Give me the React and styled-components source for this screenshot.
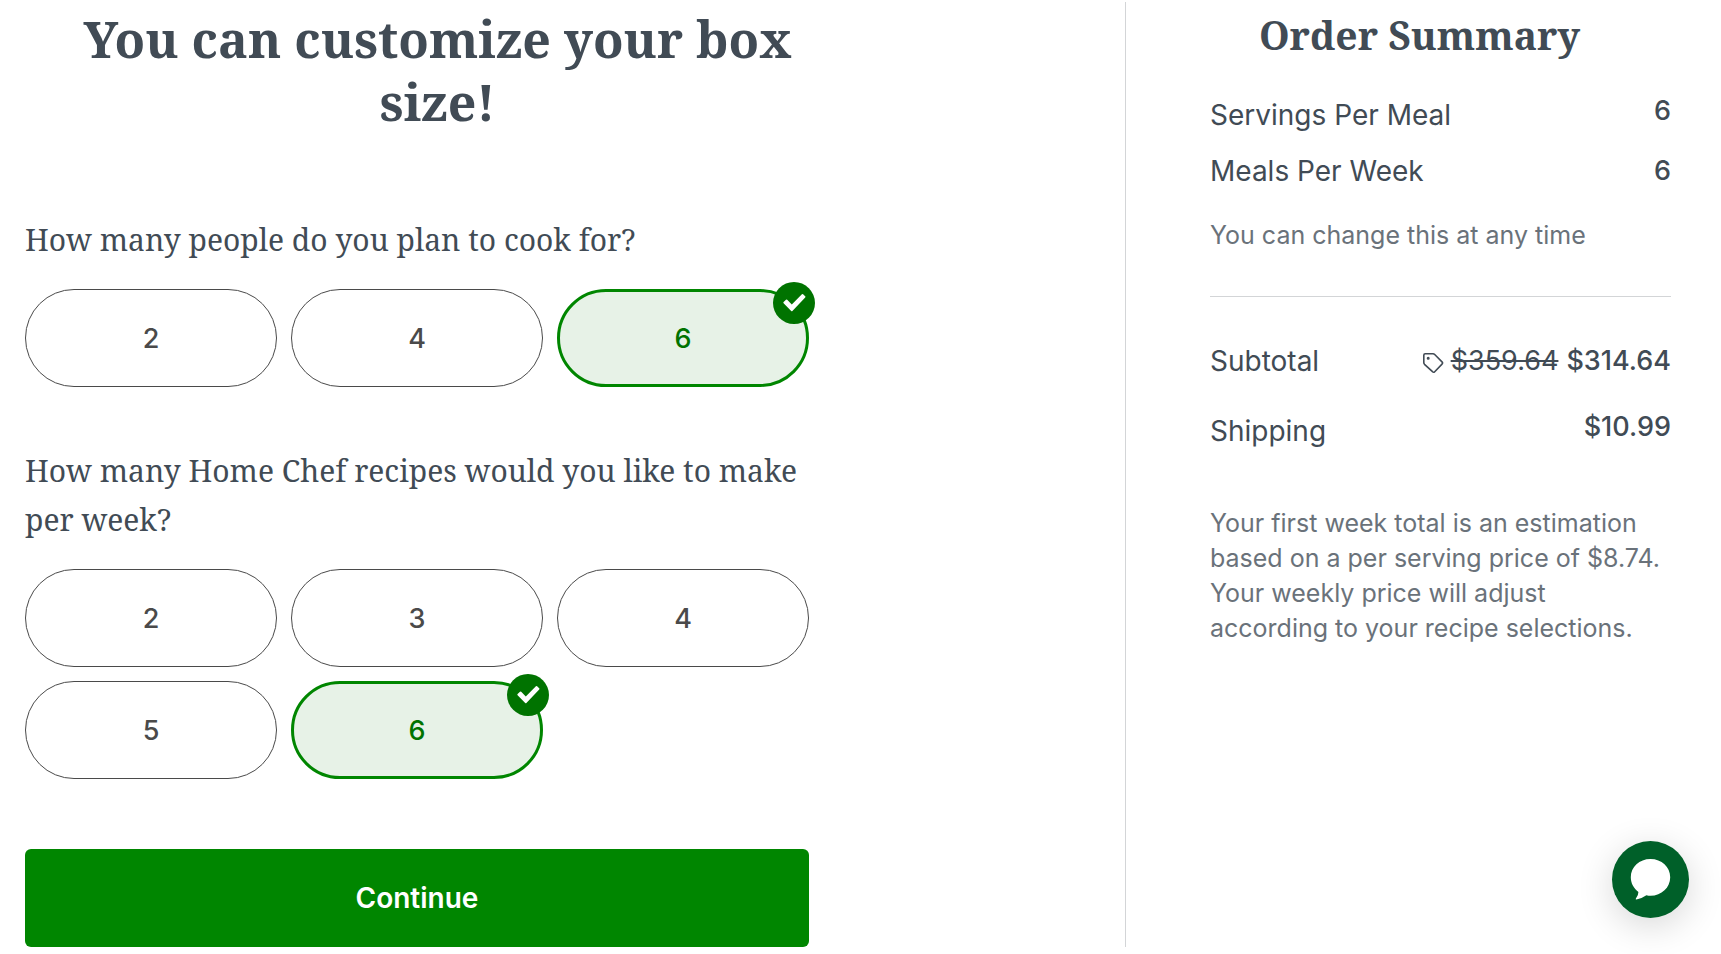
import React, { useState } from 'react';
import styled, { createGlobalStyle } from 'styled-components';

const peopleOptions = [2, 4, 6];
const recipeOptions = [2, 3, 4, 5, 6];

const OptionGroup = ({ name, question, options, value, onChange }) => {
    return (
        <Group>
            <Question>{question}</Question>
            <Options>
                {options.map(option => (
                    <Pill key={option} $selected={option === value}>
                        <input
                            type="radio"
                            name={name}
                            value={option}
                            checked={option === value}
                            onChange={() => onChange(option)}
                        />
                        {option}
                        {option === value && (
                            <Badge>
                                <svg viewBox="0 0 42 42" aria-hidden="true">
                                    <path d="M10.6 20L13 17.7Q13.6 17.1 14.2 17.7L18.8 22.4L28.9 12.2Q29.5 11.6 30.1 12.2L32.2 14.3Q32.8 14.9 32.2 15.5L19.4 28.9Q18.8 29.5 18.2 28.9L10.6 21.2Q10 20.6 10.6 20Z" fill="#fff" />
                                </svg>
                            </Badge>
                        )}
                    </Pill>
                ))}
            </Options>
        </Group>
    )
}

const App = () => {
    const [people, setPeople] = useState(6);
    const [recipes, setRecipes] = useState(6);

    return (
        <>
            <GlobalStyle />
            <Page>
                <Customize>
                    <Heading>You can customize your box size!</Heading>
                    <Form onSubmit={e => e.preventDefault()}>
                        <OptionGroup
                            name="people"
                            question="How many people do you plan to cook for?"
                            options={peopleOptions}
                            value={people}
                            onChange={setPeople}
                        />
                        <OptionGroup
                            name="recipes"
                            question="How many Home Chef recipes would you like to make per week?"
                            options={recipeOptions}
                            value={recipes}
                            onChange={setRecipes}
                        />
                        <Continue type="submit">Continue</Continue>
                    </Form>
                </Customize>
                <Summary>
                    <SummaryTitle>Order Summary</SummaryTitle>
                    <Lines $gap="16px">
                        <Line>
                            <dt>Servings Per Meal</dt>
                            <dd>{people}</dd>
                        </Line>
                        <Line $align="center">
                            <dt>Meals Per Week</dt>
                            <dd>{recipes}</dd>
                        </Line>
                    </Lines>
                    <Note $top="27px">You can change this at any time</Note>
                    <Divider />
                    <Lines $gap="30px">
                        <Line $align="center">
                            <dt>Subtotal</dt>
                            <dd>
                                <TagIcon viewBox="0 0 22 22" aria-hidden="true">
                                    <path d="M1.8 3.2Q1.8 1.8 3.2 1.8H11Q12 1.8 12.7 2.5L20 9.9Q21.1 11 20 12.1L12.7 19.7Q11.6 20.8 10.5 19.7L2.5 12.3Q1.8 11.6 1.8 10.6Z" />
                                    <circle cx="6.2" cy="6.2" r="0.7" />
                                </TagIcon>
                                <OldPrice>$359.64</OldPrice>
                                $314.64
                            </dd>
                        </Line>
                        <Line>
                            <dt>Shipping</dt>
                            <dd>$10.99</dd>
                        </Line>
                    </Lines>
                    <Note $top="55px">
                        Your first week total is an estimation based on a per serving price of $8.74. Your weekly price will adjust according to your recipe selections.
                    </Note>
                </Summary>
            </Page>
            <ChatButton type="button" aria-label="Open chat">
                <svg viewBox="0 0 77 77" aria-hidden="true">
                    <path d="M38.5 18C49.6 18 58.2 26 58.2 36.3S49.6 54.8 38.5 54.8Q36.6 54.8 34.4 54.3Q29.6 57.8 24.4 58.4Q23.2 58.4 23.9 57.4Q26.4 54.4 26.4 50.9C21.8 47.4 18.8 42.4 18.8 36.3C18.8 26 27.4 18 38.5 18Z" fill="#fff" />
                </svg>
            </ChatButton>
        </>
    )
}

const GlobalStyle = createGlobalStyle`
    * {
        box-sizing: border-box;
    }
    body {
        margin: 0;
        background-color: #fff;
        color: #414b55;
        font-family: Inter, "Liberation Sans", sans-serif;
        font-size: 27px;
    }
    h1, h2, legend {
        font-family: "Noto Serif", "DejaVu Serif Condensed", serif;
    }
`
const Page = styled.main`
    display: grid;
    grid-template-columns: minmax(0, 1125fr) minmax(0, 596fr);
    padding: 2px 0 7px;
`
const Customize = styled.section`
    padding: 6px 25px 0;
`
const Heading = styled.h1`
    max-width: 825px;
    margin: 0 0 81px;
    font-size: 50px;
    font-weight: 700;
    line-height: 63px;
    text-align: center;
`
const Form = styled.form`
    max-width: 784px;
`
const Group = styled.fieldset`
    min-width: 0;
    margin: 0 0 59px;
    padding: 0;
    border: 0;
`
const Question = styled.legend`
    padding: 0 0 25px;
    font-size: 30px;
    line-height: 49px;
`
const Options = styled.div`
    display: grid;
    grid-template-columns: repeat(3, 1fr);
    gap: 14px;
`
const Pill = styled.label`
    position: relative;
    display: flex;
    align-items: center;
    justify-content: center;
    height: 98px;
    border: ${props => props.$selected ? '3px solid #008600' : '1px solid #4a4a4a'};
    border-radius: 49px;
    background-color: ${props => props.$selected ? '#e7f2e7' : '#fff'};
    color: ${props => props.$selected ? '#007300' : '#4a4a4a'};
    font-weight: 500;
    cursor: pointer;
    input {
        position: absolute;
        opacity: 0;
    }
`
const Badge = styled.span`
    position: absolute;
    top: -10px;
    right: -9px;
    width: 42px;
    height: 42px;
    border-radius: 50%;
    background-color: #007300;
    svg {
        display: block;
    }
`
const Continue = styled.button`
    display: block;
    width: 100%;
    height: 98px;
    margin-top: 70px;
    border: 0;
    border-radius: 6px;
    background-color: #008600;
    color: #fff;
    font-family: inherit;
    font-size: 28px;
    font-weight: 600;
    cursor: pointer;
`
const Summary = styled.aside`
    padding: 9px 50px 0 84px;
    border-left: 1px solid #d3d5d7;
`
const SummaryTitle = styled.h2`
    margin: 0 0 36px;
    padding-right: 42px;
    font-size: 39px;
    font-weight: 700;
    line-height: 48px;
    text-align: center;
`
const Lines = styled.dl`
    display: flex;
    flex-direction: column;
    gap: ${props => props.$gap};
    margin: 0;
`
const Line = styled.div`
    display: flex;
    justify-content: space-between;
    align-items: ${props => props.$align || 'flex-start'};
    dt {
        font-size: 28px;
        line-height: 40px;
    }
    dd {
        display: flex;
        align-items: center;
        margin: 0;
        font-weight: 500;
        line-height: 32px;
    }
`
const TagIcon = styled.svg`
    width: 22px;
    height: 22px;
    margin: 4px 7px 0 0;
    fill: none;
    stroke: #414b55;
    stroke-width: 1.6;
`
const OldPrice = styled.s`
    margin-right: 8px;
    font-weight: 400;
`
const Note = styled.p`
    margin: ${props => props.$top} 0 0;
    padding-right: 8px;
    color: #6a727a;
    font-size: 25px;
    line-height: 35px;
`
const Divider = styled.hr`
    height: 1px;
    margin: 43px 0 44px;
    border: 0;
    background-color: #d3d5d7;
`
const ChatButton = styled.button`
    position: fixed;
    right: 32px;
    bottom: 36px;
    width: 77px;
    height: 77px;
    padding: 0;
    border: 0;
    border-radius: 50%;
    background-color: #006029;
    box-shadow: 0 8px 36px rgba(0, 0, 0, 0.16);
    cursor: pointer;
    svg {
        display: block;
    }
`

export default App;
